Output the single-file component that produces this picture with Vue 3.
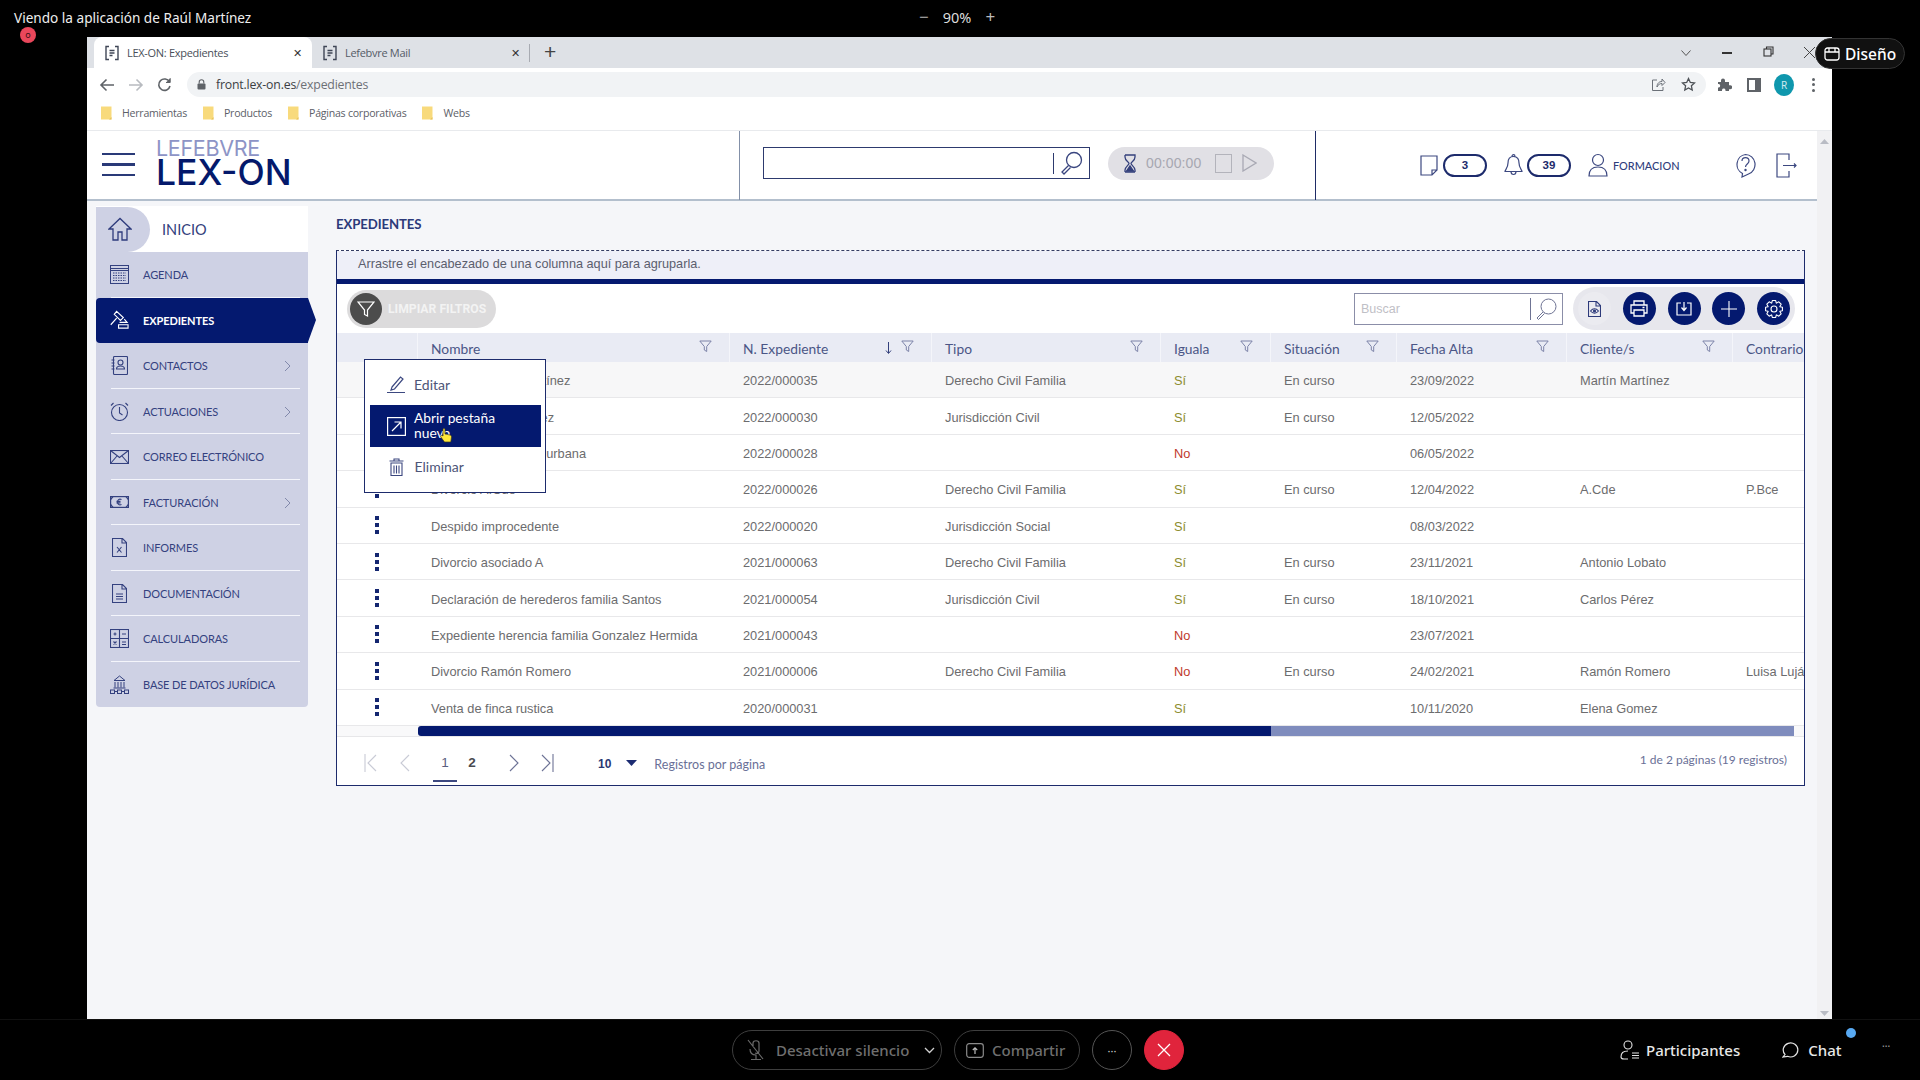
<script setup>
const nav = [
  { t: 'AGENDA', i: 'cal' },
  { t: 'EXPEDIENTES', i: 'gavel', active: true },
  { t: 'CONTACTOS', i: 'book', more: true },
  { t: 'ACTUACIONES', i: 'clock', more: true },
  { t: 'CORREO ELECTRÓNICO', i: 'mail' },
  { t: 'FACTURACIÓN', i: 'money', more: true },
  { t: 'INFORMES', i: 'xdoc' },
  { t: 'DOCUMENTACIÓN', i: 'doc' },
  { t: 'CALCULADORAS', i: 'calc' },
  { t: 'BASE DE DATOS JURÍDICA', i: 'bank' }
]
const cols = ['Nombre', 'N. Expediente', 'Tipo', 'Iguala', 'Situación', 'Fecha Alta', 'Cliente/s']
const rows = [
  ['Divorcio Martín Martínez', '2022/000035', 'Derecho Civil Familia', 'Sí', 'En curso', '23/09/2022', 'Martín Martínez', ''],
  ['Divorcio Laura Núñez', '2022/000030', 'Jurisdicción Civil', 'Sí', 'En curso', '12/05/2022', '', ''],
  ['Compra-venta finca urbana', '2022/000028', '', 'No', '', '06/05/2022', '', ''],
  ['Divorcio A.Cde', '2022/000026', 'Derecho Civil Familia', 'Sí', 'En curso', '12/04/2022', 'A.Cde', 'P.Bce'],
  ['Despido improcedente', '2022/000020', 'Jurisdicción Social', 'Sí', '', '08/03/2022', '', ''],
  ['Divorcio asociado A', '2021/000063', 'Derecho Civil Familia', 'Sí', 'En curso', '23/11/2021', 'Antonio Lobato', ''],
  ['Declaración de herederos familia Santos', '2021/000054', 'Jurisdicción Civil', 'Sí', 'En curso', '18/10/2021', 'Carlos Pérez', ''],
  ['Expediente herencia familia Gonzalez Hermida', '2021/000043', '', 'No', '', '23/07/2021', '', ''],
  ['Divorcio Ramón Romero', '2021/000006', 'Derecho Civil Familia', 'No', 'En curso', '24/02/2021', 'Ramón Romero', 'Luisa Luján'],
  ['Venta de finca rustica', '2020/000031', '', 'Sí', '', '10/11/2020', 'Elena Gomez', '']
]
const bookmarks = ['Herramientas', 'Productos', 'Páginas corporativas', 'Webs']

const gear = (() => {
  const pts = []
  const teeth = 8
  for (let k = 0; k < teeth; k++) {
    const a = (k / teeth) * Math.PI * 2
    const s = Math.PI / teeth
    const p = [[a - s * 0.95, 6.4], [a - s * 0.5, 8.6], [a + s * 0.5, 8.6], [a + s * 0.95, 6.4]]
    for (const [t, r] of p) pts.push((9 + r * Math.cos(t)).toFixed(2) + ',' + (9 + r * Math.sin(t)).toFixed(2))
  }
  return pts.join(' ')
})()
</script>

<template>
  <div class="screen">
    <div class="topbar">
      <span class="viewing">Viendo la aplicación de Raúl Martínez</span>
      <div class="zoomctl"><span class="pm">−</span><span>90%</span><span class="pm">+</span></div>
    </div>
    <span class="recdot">o</span>
    <div class="design">
      <svg width="16" height="14" viewBox="0 0 16 14" fill="none" stroke="#fff" stroke-width="1.3"><rect x="1" y="1" width="14" height="12" rx="2.5"/><path d="M1 5h14M5 1v4M11 1v4"/></svg>
      <span>Diseño</span>
    </div>

    <div class="middle">
      <div class="window">
        <div class="tabstrip">
          <div class="tab active">
            <svg class="tabicon" width="16" height="16" viewBox="0 0 16 16" fill="none" stroke="#3f4656" stroke-width="1.4"><path d="M5 1.500H2v13h3M11 1.500h3v13h-3M5.500 5.500h5M5.500 8h5M5.500 10.500h3"/></svg>
            <span class="tabtext">LEX-ON: Expedientes</span><span class="tabx">✕</span>
          </div>
          <div class="tab">
            <svg class="tabicon" width="16" height="16" viewBox="0 0 16 16" fill="none" stroke="#3f4656" stroke-width="1.4"><path d="M5 1.500H2v13h3M11 1.500h3v13h-3M5.500 5.500h5M5.500 8h5M5.500 10.500h3"/></svg>
            <span class="tabtext">Lefebvre Mail</span><span class="tabx">✕</span>
          </div>
          <span class="tabsep"></span>
          <span class="tabplus">+</span>
          <div class="winctl">
            <svg width="12" height="8" viewBox="0 0 12 8" fill="none" stroke="#555" stroke-width="1"><path d="M1.500 1.500 6 6.500l4.500-5"/></svg>
            <span class="wmin"></span>
            <svg width="11" height="11" viewBox="0 0 11 11" fill="none" stroke="#333" stroke-width="1.100"><rect x="1" y="3" width="7" height="7"/><path d="M3.500 3V1H10v7H8"/></svg>
            <svg width="13" height="13" viewBox="0 0 13 13" fill="none" stroke="#444" stroke-width="1"><path d="M1 1l11 11M12 1 1 12"/></svg>
          </div>
        </div>

        <div class="toolbar">
          <svg class="tb" width="16" height="14" viewBox="0 0 16 14" fill="none" stroke="#5f6368" stroke-width="1.600"><path d="M15 7H2M7.500 1.500 2 7l5.500 5.500"/></svg>
          <svg class="tb" width="16" height="14" viewBox="0 0 16 14" fill="none" stroke="#b8bbc0" stroke-width="1.600"><path d="M1 7h13M8.500 1.500 14 7l-5.500 5.500"/></svg>
          <svg class="tb" width="15" height="15" viewBox="0 0 15 15" fill="none" stroke="#5f6368" stroke-width="1.600"><path d="M12.500 5A5.700 5.700 0 1 0 13 9"/><path d="M13.200 1.200v4.300H9" fill="#5f6368" stroke-width="1"/></svg>
          <div class="omni">
            <svg width="9" height="11" viewBox="0 0 9 11" fill="#5f6368"><rect x="0.500" y="4.500" width="8" height="6" rx="1"/><path d="M2.200 4.500V3a2.300 2.300 0 0 1 4.600 0v1.500" fill="none" stroke="#5f6368" stroke-width="1.100"/></svg>
            <span class="url">front.lex-on.es<em>/expedientes</em></span>
            <svg class="share" width="15" height="15" viewBox="0 0 15 15" fill="none" stroke="#6b7078" stroke-width="1"><path d="M6 3H1.500v10.500H12V10M6 10c0-4 2.500-5.500 5-5.500V2l3 3.500-3 3V6.500c-2 0-4 1-5 3.500z"/></svg>
            <svg width="15" height="15" viewBox="0 0 15 15" fill="none" stroke="#4d5156" stroke-width="1.300"><path d="M7.500 1.500l1.800 3.900 4.200.5-3.100 2.900.8 4.200-3.700-2.100-3.700 2.100.8-4.200L1.500 5.900l4.200-.5z"/></svg>
          </div>
          <svg class="tbr first" width="15" height="15" viewBox="0 0 15 15" fill="#5f6368"><path d="M1 5h3V3.500a2 2 0 0 1 4 0V5h4v3.200h1.200a2 2 0 0 1 0 4H12V14H8.500v-1a1.800 1.800 0 0 0-3.500 0v1H1v-3.500h.8a1.800 1.800 0 0 0 0-3.500H1z"/></svg>
          <svg class="tbr" width="14" height="14" viewBox="0 0 14 14" fill="#5f6368"><path d="M0 0h14v14H0zM2 2v10h6V2z" fill-rule="evenodd"/></svg>
          <span class="avatar">R</span>
          <span class="kebabchrome"><i></i><i></i><i></i></span>
        </div>

        <div class="bookmarks">
          <div v-for="b in bookmarks" :key="b" class="bm">
            <svg width="11" height="15" viewBox="0 0 11 15"><path d="M0 1.500h10.500v13H0z" fill="#f8da7c"/><path d="M8 14.500 10.500 12v2.500z" fill="#e6c25c"/></svg>
            <span>{{ b }}</span>
          </div>
        </div>

        <div class="app">
          <div class="appmain">
            <header class="apphead">
              <div class="brand">
                <div class="burger"><i></i><i></i><i></i></div>
                <div class="logo"><span class="l1">LEFEBVRE</span><span class="l2">LEX-ON</span></div>
              </div>
              <div class="headmid">
                <div class="gsearch">
                  <span class="vbar"></span>
                  <svg width="23" height="24" viewBox="0 0 23 24" fill="none" stroke="#39457f" stroke-width="1.300"><circle cx="14" cy="9" r="7.500"/><path d="M8.500 14.500 2 21l2 2 6.500-6.500"/></svg>
                </div>
                <div class="timer">
                  <svg width="12" height="19" viewBox="0 0 12 19" fill="none" stroke="#34407c" stroke-width="1.300"><path d="M1 1h10v2M1 3V1M1 18h10M1 3c0 4 4 5 4 6.500S1 13 1 16v2M11 3c0 4-4 5-4 6.500s4 3.500 4 6.500v2"/><path d="M2.500 17 6 12l3.500 5z" fill="#34407c"/></svg>
                  <span class="ttime">00:00:00</span>
                  <span class="tstop"></span>
                  <svg width="15" height="18" viewBox="0 0 15 18" fill="none" stroke="#a9a9b4" stroke-width="1.300"><path d="M1 1l13 8-13 8z"/></svg>
                </div>
              </div>
              <div class="headright">
                <svg class="note" width="18" height="21" viewBox="0 0 18 21" fill="none" stroke="#3c4880" stroke-width="1.200"><path d="M1 1h16v14l-5 5H1zM17 15h-5v5"/></svg>
                <span class="countpill">3</span>
                <svg class="bell" width="19" height="24" viewBox="0 0 19 24" fill="none" stroke="#3c4880" stroke-width="1.200"><path d="M9.500 3.500c-4 0-5.500 3-5.500 6.500 0 5-3 7-3 8.500h17c0-1.500-3-3.500-3-8.500 0-3.500-1.500-6.500-5.500-6.500zM8 3.500c0-2.500 3-2.500 3 0M7 18.500c0 4 5 4 5 0"/></svg>
                <span class="countpill">39</span>
                <svg class="user" width="20" height="24" viewBox="0 0 20 24" fill="none" stroke="#3c4880" stroke-width="1.200"><circle cx="10" cy="7" r="5.500"/><path d="M1 23c0-7 4-9 9-9s9 2 9 9z"/></svg>
                <span class="formacion">FORMACION</span>
                <svg class="help" width="21" height="25" viewBox="0 0 21 25" fill="none" stroke="#3c4880" stroke-width="1.200"><path d="M10.500 1.500a9.500 10 0 0 1 3 19.500L7 24l.5-3.500a9.500 10 0 0 1 3-19z"/><path d="M7 8c0-4.500 7-4.500 7 0 0 3-3.500 3-3.500 6"/><circle cx="10.500" cy="17" r=".6"/></svg>
                <svg class="logout" width="21" height="25" viewBox="0 0 21 25" fill="none" stroke="#3c4880" stroke-width="1.200"><path d="M13 7V1H1v23h12v-6M7 12.500h13M18 10.500l2 2-2 2"/></svg>
              </div>
            </header>

            <div class="appbody">
              <aside class="sidebar">
                <div class="home">
                  <span class="homeicon">
                    <svg width="24" height="24" viewBox="0 0 24 24" fill="none" stroke="#2e3b7c" stroke-width="1.300"><path d="M1 12 12 1.500 23 12h-4v11h-5v-8h-4v8H5V12z"/></svg>
                  </span>
                  <span class="hometext">INICIO</span>
                </div>
                <div class="navlist">
                  <div v-for="n in nav" :key="n.t" class="navitem" :class="{ on: n.active }">
                    <span class="navicon">
                      <svg v-if="n.i === 'cal'" width="19" height="19" viewBox="0 0 19 19" fill="none" stroke="currentColor" stroke-width="1"><rect x=".5" y=".5" width="18" height="18"/><path d="M.5 3.500h18M.5 5.500h18" /><path d="M3 8h13M3 10.500h13M3 13h13M3 15.500h13" stroke-dasharray="1.500 1"/></svg>
                      <svg v-else-if="n.i === 'gavel'" width="20" height="20" viewBox="0 0 20 20" fill="none" stroke="currentColor" stroke-width="1.200"><path d="M7 1l7 6.500-3 3L4.500 4zM7 8 .8 15M9 15h10v3.500H9z"/><path d="M15 9l3 3.500h-8"/></svg>
                      <svg v-else-if="n.i === 'book'" width="17" height="19" viewBox="0 0 17 19" fill="none" stroke="currentColor" stroke-width="1.100"><rect x="2.500" y=".5" width="14" height="18" rx="1"/><path d="M.5 4h3M.5 7h3M.5 10h3M.5 13h3"/><circle cx="9.500" cy="6.500" r="2.500"/><path d="M5.500 13c0-4 8-4 8 0z"/></svg>
                      <svg v-else-if="n.i === 'clock'" width="19" height="19" viewBox="0 0 19 19" fill="none" stroke="currentColor" stroke-width="1.100"><circle cx="9.500" cy="10.500" r="8"/><path d="M9.500 5v6l3 2M1 3.500 3.500 1M18 3.500 15.500 1"/></svg>
                      <svg v-else-if="n.i === 'mail'" width="19" height="14" viewBox="0 0 19 14" fill="none" stroke="currentColor" stroke-width="1.100"><rect x=".5" y=".5" width="18" height="13"/><path d="M.5.500l9 7 9-7M.5 13.500l6.500-7.500M18.500 13.500 12 6"/></svg>
                      <svg v-else-if="n.i === 'money'" width="19" height="12" viewBox="0 0 19 12" fill="none" stroke="currentColor" stroke-width="1.200"><rect x=".6" y=".6" width="17.800" height="10.800"/><path d="M.6 3.500 3 .6M16 .6l2.400 3M.6 8.500 3 11.400M16 11.400l2.400-3" /><path d="M11.500 3.500C9 2.500 7.500 4 7.500 6s1.500 3.500 4 2.500M6.500 5.300h4M6.500 6.800h4"/></svg>
                      <svg v-else-if="n.i === 'xdoc'" width="15" height="19" viewBox="0 0 15 19" fill="none" stroke="currentColor" stroke-width="1.100"><path d="M.5.500h10l4 4v14H.5zM10 .5v4.500h4.500M5 9l4.500 5.500M9.500 9 5 14.500"/></svg>
                      <svg v-else-if="n.i === 'doc'" width="15" height="19" viewBox="0 0 15 19" fill="none" stroke="currentColor" stroke-width="1.100"><path d="M.5.500h10l4 4v14H.5zM10 .5v4.500h4.500M4 10h7M4 12.500h7M4 15h7"/></svg>
                      <svg v-else-if="n.i === 'calc'" width="19" height="19" viewBox="0 0 19 19" fill="none" stroke="currentColor" stroke-width="1.100"><rect x=".5" y=".5" width="18" height="18"/><path d="M.5 9.500h18M9.500.5v18M3.500 5h3M5 3.500v3M12 5h4M3.500 12.500l3 3M6.500 12.500l-3 3M12 13h4M12 15.500h4"/></svg>
                      <svg v-else width="19" height="19" viewBox="0 0 19 19" fill="none" stroke="currentColor" stroke-width="1"><path d="M4 5.500 9.500 1 15 5.500zM4 5.500h11M5 7v5.500M8 7v5.500M11 7v5.500M14 7v5.500M3.500 13h12"/><rect x=".5" y="15" width="4" height="3.500"/><rect x="7.500" y="15" width="4" height="3.500"/><rect x="14.500" y="15" width="4" height="3.500"/><path d="M4.500 16.500h3M11.500 16.500h3"/></svg>
                    </span>
                    <span class="navtext">{{ n.t }}</span>
                    <svg v-if="n.more" class="chev" width="7" height="12" viewBox="0 0 7 12" fill="none" stroke="#8289ab" stroke-width="1"><path d="M1 1l5 5-5 5"/></svg>
                  </div>
                </div>
              </aside>

              <main class="content">
                <h1 class="title">EXPEDIENTES</h1>
                <section class="panel">
                  <div class="groupbar">Arrastre el encabezado de una columna aquí para agruparla.</div>
                  <div class="gridtools">
                    <div class="clearbtn">
                      <span class="clearcirc">
                        <svg width="18" height="18" viewBox="0 0 18 18" fill="none" stroke="#fff" stroke-width="1.200"><path d="M1 2h16l-6.500 8v6l-3-1.500V10z"/></svg>
                      </span>
                      <span class="cleartext">LIMPIAR FILTROS</span>
                    </div>
                    <div class="gsearch2">
                      <span class="ph">Buscar</span>
                      <span class="vbar2"></span>
                      <svg width="22" height="22" viewBox="0 0 22 22" fill="none" stroke="#6f7494" stroke-width="1"><circle cx="13.500" cy="8.500" r="7.500"/><path d="M8 14 2 20l1.500 1.500 6-6"/></svg>
                    </div>
                    <div class="actions">
                      <span class="act plain">
                        <svg width="13" height="16" viewBox="0 0 13 16" fill="none" stroke="#2d3a7a" stroke-width="1.100"><path d="M.5.500h8l4 4v11H.5zM8 .5V5h4.500"/><path d="M2.500 10c2.500-3 5.500-3 8 0-2.500 3-5.500 3-8 0z"/><circle cx="6.500" cy="10" r="1" fill="#2d3a7a"/></svg>
                      </span>
                      <span class="act">
                        <svg width="18" height="17" viewBox="0 0 18 17" fill="none" stroke="#fff" stroke-width="1.300"><path d="M4 5V1h10v4M4 13H1V5h16v8h-3M4 10h10v6H4zM12.500 7.500h2"/></svg>
                      </span>
                      <span class="act">
                        <svg width="16" height="15" viewBox="0 0 16 15" fill="none" stroke="#fff" stroke-width="1.200"><path d="M5 2H1v12h14V2h-4M8 1v8M5.500 6.500 8 9.500l2.500-3"/></svg>
                      </span>
                      <span class="act">
                        <svg width="18" height="18" viewBox="0 0 18 18" fill="none" stroke="#fff" stroke-width="1.100"><path d="M9 1v16M1 9h16"/></svg>
                      </span>
                      <span class="act">
                        <svg width="18" height="18" viewBox="0 0 18 18" fill="none" stroke="#fff" stroke-width="1.100" stroke-linejoin="round"><polygon :points="gear"/><circle cx="9" cy="9" r="3"/></svg>
                      </span>
                    </div>
                  </div>

                  <div class="gridwrap">
                    <div class="ghead">
                      <div class="hfirst"></div>
                      <div v-for="c in cols" :key="c" class="hcell">
                        <span class="hname">{{ c }}</span>
                        <svg v-if="c === 'N. Expediente'" class="sort" width="7" height="12" viewBox="0 0 7 12" fill="none" stroke="#34407c" stroke-width="1"><path d="M3.500 0v11M1 8.500l2.500 3 2.500-3"/></svg>
                        <svg class="hfilter" width="13" height="13" viewBox="0 0 13 13" fill="none" stroke="#7c83a8" stroke-width="1"><path d="M.8 1h11.400L7.700 6.500v5l-2.400-1.500V6.500z"/></svg>
                      </div>
                      <div class="hcell last"><span class="hname">Contrario</span></div>
                    </div>
                    <div v-for="(r, i) in rows" :key="i" class="grow" :class="{ hov: i === 0 }">
                      <div class="kebab"><i></i><i></i><i></i></div>
                      <div v-for="(v, j) in r" :key="j" class="cell" :class="{ si: j === 3 && v === 'Sí', no: j === 3 && v === 'No' }">{{ v }}</div>
                    </div>
                  </div>

                  <div class="hscroll"><div class="hthumb"></div></div>

                  <div class="pager">
                    <svg width="14" height="18" viewBox="0 0 14 18" fill="none" stroke="#c9cbd6" stroke-width="1.100"><path d="M1 0v18M12 1 4 9l8 8"/></svg>
                    <svg class="p2" width="10" height="18" viewBox="0 0 10 18" fill="none" stroke="#c9cbd6" stroke-width="1.100"><path d="M9 1 1 9l8 8"/></svg>
                    <span class="pnum cur">1</span>
                    <span class="pnum bold">2</span>
                    <svg class="p3" width="10" height="18" viewBox="0 0 10 18" fill="none" stroke="#6d7396" stroke-width="1.100"><path d="M1 1l8 8-8 8"/></svg>
                    <svg class="p4" width="14" height="18" viewBox="0 0 14 18" fill="none" stroke="#6d7396" stroke-width="1.100"><path d="M13 0v18M2 1l8 8-8 8"/></svg>
                    <span class="psize">10</span>
                    <svg class="pcar" width="11" height="6" viewBox="0 0 11 6" fill="#1c2c72"><path d="M0 0h11L5.500 6z"/></svg>
                    <span class="plabel">Registros por página</span>
                    <span class="pinfo">1 de 2 páginas (19 registros)</span>
                  </div>

                  <div class="popup">
                    <div class="pitem">
                      <svg width="19" height="18" viewBox="0 0 19 18" fill="none" stroke="#3c4880" stroke-width="1.200"><path d="M5 12 13.500 2l2.500 2-8.500 10-3.500 1zM0 17.500h18"/></svg>
                      <span>Editar</span>
                    </div>
                    <div class="pitem sel">
                      <svg width="19" height="19" viewBox="0 0 19 19" fill="none" stroke="#fff" stroke-width="1.200"><rect x=".6" y=".6" width="17.800" height="17.800"/><path d="M5 14 14 5M7.500 5H14v6.500"/></svg>
                      <span>Abrir pestaña nueva</span>
                      <svg class="hand" width="12" height="15" viewBox="0 0 12 15"><path d="M3 1.500c0-1.300 2-1.300 2 0V6l5 1c1 .3 1.500 1 1.500 2l-.7 5H4.500L.8 9c-.8-1.300.8-2.200 2.200-1z" fill="#ffe83a" stroke="#3a3a20" stroke-width=".7"/></svg>
                    </div>
                    <div class="pitem">
                      <svg width="15" height="18" viewBox="0 0 15 18" fill="none" stroke="#3c4880" stroke-width="1.100"><path d="M.5 3h14M5 3V1h5v2M2 5h11v12.500H2zM5 7.500v8M7.500 7.500v8M10 7.500v8"/></svg>
                      <span>Eliminar</span>
                    </div>
                  </div>
                </section>
              </main>
            </div>
          </div>
          <div class="vscroll">
            <svg width="9" height="5" viewBox="0 0 9 5" fill="#b9bcc4"><path d="M4.500 0 9 5H0z"/></svg>
            <svg width="9" height="5" viewBox="0 0 9 5" fill="#b9bcc4"><path d="M0 0h9L4.500 5z"/></svg>
          </div>
        </div>
      </div>
    </div>

    <div class="callbar">
      <div class="cpill mute">
        <svg width="18" height="22" viewBox="0 0 18 22" fill="none" stroke="#6b6b6b" stroke-width="1.200"><path d="M1 1l15 19M6 8V4c0-3 6-3 6 0v8c0 2-2 3-4 2M3 10c0 5 3 6 6 6v4M4 20.500h10"/></svg>
        <span>Desactivar silencio</span>
        <svg class="cchev" width="11" height="7" viewBox="0 0 11 7" fill="none" stroke="#d0d0d0" stroke-width="1.300"><path d="M1 1l4.500 4.500L10 1"/></svg>
      </div>
      <div class="cpill share2">
        <svg width="18" height="15" viewBox="0 0 18 15" fill="none" stroke="#8a8a8a" stroke-width="1.200"><rect x=".7" y=".7" width="16.600" height="13.600" rx="2.500"/><path d="M9 11V5M6.800 7 9 4.800 11.200 7" stroke="#bbb"/></svg>
        <span>Compartir</span>
      </div>
      <div class="cround">···</div>
      <div class="cround red">
        <svg width="14" height="14" viewBox="0 0 14 14" fill="none" stroke="#fff" stroke-width="1.300"><path d="M1 1l12 12M13 1 1 13"/></svg>
      </div>
      <div class="cright">
        <svg width="20" height="20" viewBox="0 0 20 20" fill="none" stroke="#e4e4e4" stroke-width="1.100"><circle cx="8" cy="5" r="4"/><path d="M8 11c-5 0-7 2-7 6 0 1.500 1 2 3 2h4M12 13h7M12 15.500h7M12 18h7"/></svg>
        <span class="ptext">Participantes</span>
        <svg class="chatic" width="17" height="16" viewBox="0 0 17 16" fill="none" stroke="#e4e4e4" stroke-width="1.200"><path d="M3 12.500a7.300 7 0 1 1 2.500 1.800L1 15z"/></svg>
        <span class="chattext">Chat</span>
        <span class="bluedot"></span>
        <span class="morer">···</span>
      </div>
    </div>
  </div>
</template>

<style scoped>
.screen { position: relative; width: 1920px; height: 1080px; background: #000; display: flex; flex-direction: column; overflow: hidden; font-family: "Liberation Sans", Arial, sans-serif; }
.topbar { height: 37px; display: flex; align-items: center; position: relative; color: #eee; font-family: "Noto Sans", sans-serif; }
.viewing { margin-left: 14px; font-size: 13.600px; margin-top: -2px; }
.zoomctl { position: absolute; left: 919px; top: 5px; display: flex; gap: 14px; align-items: center; font-size: 14.500px; color: #ddd; }
.pm { font-size: 17px; color: #bbb; }
.recdot { position: absolute; left: 20px; top: 27px; width: 16px; height: 16px; border-radius: 50%; background: #e9475b; color: #3a0f14; font: 9px/15px "Noto Sans", sans-serif; text-align: center; z-index: 5; }
.design { position: absolute; left: 1815px; top: 38px; width: 90px; height: 31px; border-radius: 16px; background: #111; border: 1px solid #333; box-sizing: border-box; display: flex; align-items: center; gap: 5px; padding-left: 8px; color: #fff; font: 500 15.500px "Noto Sans", sans-serif; z-index: 5; }
.middle { height: 982px; padding-left: 87px; }
.window { width: 1745px; height: 982px; background: #fff; display: flex; flex-direction: column; }

.tabstrip { height: 31px; background: #dee1e6; display: flex; align-items: stretch; padding-left: 7px; position: relative; }
.tab { width: 218px; display: flex; align-items: center; padding: 0 10px 0 10px; box-sizing: border-box; color: #555b66; font: 11px "Open Sans", sans-serif; }
.tab.active { background: #fff; border-radius: 8px 8px 0 0; color: #4a4f59; }
.tabicon { margin-right: 7px; }
.tabtext { flex: 1; letter-spacing: -.3px; }
.tabx { font-size: 11px; color: #333; }
.tabsep { width: 1px; height: 18px; background: #a8abb2; margin: 7px 0 0 -1px; }
.tabplus { font: 300 21px/29px "Liberation Sans", sans-serif; color: #444; margin-left: 14px; }
.winctl { position: absolute; left: 1591px; right: 0; top: 0; height: 31px; display: flex; align-items: center; }
.winctl svg:nth-child(1) { position: absolute; left: 2px; top: 12px; }
.wmin { position: absolute; left: 44px; top: 15px; width: 10px; height: 1.500px; background: #333; }
.winctl svg:nth-child(3) { position: absolute; left: 85px; top: 9px; }
.winctl svg:nth-child(4) { position: absolute; left: 125px; top: 9px; }

.toolbar { height: 30px; display: flex; align-items: center; padding: 2px 0 0 12px; border-top: 1px solid #fff; box-sizing: border-box; }
.tb { margin-right: 13px; flex: none; }
.omni { width: 1519px; height: 25px; margin-left: 2px; border-radius: 13px; background: #f1f3f5; display: flex; align-items: center; padding: 0 10px 0 10px; box-sizing: border-box; }
.url { margin-left: 10px; flex: 1; font: 12.300px "Open Sans", sans-serif; color: #3c4043; letter-spacing: -.2px; }
.url em { font-style: normal; color: #6d7075; }
.share { margin-right: 15px; }
.tbr { margin-left: 15px; flex: none; }
.tbr.first { margin-left: 11px; }
.avatar { margin-left: 13px; width: 20px; height: 22px; border-radius: 50%; background: #0f97ad; color: #cfeaf0; font: 10px/22px "Noto Sans", sans-serif; text-align: center; }
.kebabchrome { margin-left: 18px; display: flex; flex-direction: column; gap: 2.500px; }
.kebabchrome i { width: 3px; height: 3px; border-radius: 50%; background: #5f6368; }

.bookmarks { height: 33px; display: flex; align-items: center; padding: 0 0 3px 14px; border-bottom: 1px solid #e8eaed; box-sizing: border-box; gap: 16px; }
.bm { display: flex; align-items: center; gap: 10px; font: 10.600px "Open Sans", sans-serif; color: #5c6068; letter-spacing: -.25px; }

.app { flex: 1; display: flex; min-height: 0; }
.appmain { flex: 1; min-width: 0; background: #f5f6f9; display: flex; flex-direction: column; }
.vscroll { width: 15px; background: #f1f1f3; display: flex; flex-direction: column; justify-content: space-between; align-items: center; padding: 8px 0 3px; box-sizing: border-box; }

.apphead { height: 70px; background: #fff; border-bottom: 2px solid #b3bfcd; box-sizing: border-box; display: flex; flex: none; }
.brand { width: 653px; display: flex; align-items: center; border-right: 1.500px solid #8390a8; box-sizing: border-box; padding-left: 15px; margin-bottom: -1px; }
.burger { width: 33px; display: flex; flex-direction: column; gap: 8px; margin-right: 21px; margin-top: -2px; }
.burger i { height: 2.500px; background: #2a3a78; }
.logo { display: flex; flex-direction: column; font-family: Inter, sans-serif; margin-top: -7px; }
.l1 { font-size: 21.500px; line-height: 21px; color: #8d94c6; letter-spacing: -.3px; }
.l2 { font-size: 35.500px; line-height: 28px; color: #04196b; font-weight: 500; letter-spacing: 0; }
.headmid { width: 576px; display: flex; align-items: center; gap: 18px; padding-left: 23px; border-right: 1.500px solid #1f2c66; box-sizing: border-box; margin-bottom: -1px; padding-bottom: 5px; }
.gsearch { width: 327px; height: 32px; border: 1.500px solid #2d3a6e; box-sizing: border-box; display: flex; align-items: center; justify-content: flex-end; padding-right: 6px; gap: 6px; background: #fff; }
.vbar { width: 1px; height: 21px; background: #2d3a6e; }
.timer { width: 166px; height: 33px; border-radius: 17px; background: #e1e0e5; display: flex; align-items: center; padding-left: 16px; box-sizing: border-box; }
.ttime { margin-left: 10px; font: 14px "Liberation Sans", sans-serif; color: #a7a7b1; letter-spacing: .1px; }
.tstop { width: 15px; height: 17px; border: 1.500px solid #b3b3bb; margin: 0 10px 0 14px; }
.headright { flex: 1; position: relative; display: flex; align-items: center; padding-left: 104px; }
.note { margin-right: 5px; }
.countpill { width: 44px; height: 23px; border-radius: 12px; border: 2px solid #1d2b6c; box-sizing: border-box; display: flex; align-items: center; justify-content: center; font: 700 11.500px "Liberation Sans", sans-serif; color: #1d2b6c; }
.bell { margin: 0 4px 0 17px; }
.user { margin-left: 17px; }
.formacion { margin-left: 5px; font: 500 10.900px Lato, sans-serif; color: #2f3d7c; }
.help { margin-left: 55px; }
.logout { margin-left: 20px; }

.appbody { flex: 1; display: flex; min-height: 0; }
.sidebar { width: 212px; margin: 5px 0 0 9px; flex: none; }
.home { height: 46px; background: #fff; display: flex; align-items: center; }
.homeicon { width: 54px; height: 45px; background: #ced1e4; border-radius: 0 24px 24px 0; display: flex; align-items: center; justify-content: center; padding-right: 6px; box-sizing: border-box; }
.hometext { margin-left: 12px; font: 14.500px Lato, sans-serif; color: #33407c; }
.navlist { background: #ced1e4; border-radius: 0 0 4px 4px; display: flex; flex-direction: column; }
.navitem { height: 45.500px; display: flex; align-items: center; position: relative; padding-left: 14px; color: #34417f; box-sizing: border-box; }
.navitem::after { content: ""; position: absolute; left: 15px; right: 8px; bottom: 0; height: 1px; background: #f4f5fb; }
.navitem:last-child::after, .navitem.on::after { display: none; }
.navitem.on { background: #04196f; color: #fff; border-radius: 4px 0 0 4px; font-weight: 700; }
.navitem.on::before { content: ""; position: absolute; left: 100%; top: 0; border-left: 8px solid #04196f; border-top: 22.750px solid transparent; border-bottom: 22.750px solid transparent; }
.navicon { width: 19px; height: 20px; display: flex; align-items: center; justify-content: center; flex: none; }
.navtext { margin-left: 14px; font: 11px Lato, sans-serif; letter-spacing: -.1px; }
.navitem.on .navtext { font-weight: 700; }
.chev { position: absolute; right: 17px; top: 17px; }

.content { width: 1469px; margin-left: 28px; flex: none; }
.title { margin: 14px 0 0; font: 700 13.200px/18px Lato, sans-serif; color: #2c3a7a; height: 35px; letter-spacing: -.1px; }
.panel { position: relative; height: 536px; box-sizing: border-box; background: #fff; border: 1px solid #1d2b6c; border-top: 1px dashed #333b63; overflow: hidden; display: flex; flex-direction: column; }
.groupbar { height: 28px; background: #eeeff8; font-size: 12.700px; color: #5b5e6e; padding-left: 21px; line-height: 26px; flex: none; border-bottom: 5px solid #04196f; box-sizing: content-box; }
.gridtools { height: 49px; display: flex; align-items: center; flex: none; position: relative; }
.clearbtn { margin-left: 10px; width: 149px; height: 38px; border-radius: 19px; background: #dcdbdc; display: flex; align-items: center; padding-left: 3px; box-sizing: border-box; }
.clearcirc { width: 32px; height: 32px; border-radius: 50%; background: #4c4c4c; display: flex; align-items: center; justify-content: center; }
.cleartext { margin-left: 6px; color: #f3f3f3; font: 700 12.200px Roboto, sans-serif; }
.gsearch2 { position: absolute; left: 1017px; top: 9px; width: 209px; height: 32px; border: 1px solid #8b8ea8; box-sizing: border-box; display: flex; align-items: center; padding: 0 5px 0 6px; }
.ph { flex: 1; font-size: 12.500px; color: #bfc0c6; }
.vbar2 { width: 1px; height: 22px; background: #6f7494; margin-right: 4px; }
.actions { position: absolute; left: 1236px; top: 3px; width: 222px; height: 43px; border-radius: 22px; background: #e7e7ed; display: flex; align-items: center; justify-content: space-between; padding: 0 5px; box-sizing: border-box; }
.act { width: 33px; height: 33px; border-radius: 50%; background: #04196f; display: flex; align-items: center; justify-content: center; }
.act.plain { background: #ebebf0; }

.gridwrap { flex: none; width: 1640px; }
.ghead, .grow { display: grid; grid-template-columns: 80px 312px 202px 229px 110px 126px 170px 166px 245px; }
.ghead { height: 29px; background: #e9ebf4; }
.hcell { display: flex; align-items: center; padding: 2px 17px 0 14px; position: relative; box-shadow: inset 1px 0 0 #f4f5fa; white-space: nowrap; overflow: hidden; }
.hcell.last { overflow: visible; }
.hname { flex: 1; font: 13.800px Lato, sans-serif; color: #4b5686; }
.hfilter { flex: none; margin-top: -4px; }
.sort { margin-right: 9px; margin-top: -2px; }
.grow { height: 36.400px; border-bottom: 1px solid #e8e8ea; box-sizing: border-box; background: #fff; align-items: center; }
.grow.hov { background: #f7f7f8; }
.cell { padding: 2px 0 0 14px; font-size: 12.800px; color: #6c6c6e; white-space: nowrap; overflow: hidden; }
.cell.si { color: #8c8c2e; }
.cell.no { color: #c0392b; }
.kebab { padding-left: 38px; display: flex; flex-direction: column; gap: 3px; }
.kebab i { width: 4px; height: 4px; background: #142670; }
.hscroll { height: 11px; background: #f9f9fa; padding-left: 81px; padding-right: 10px; flex: none; border-bottom: 1px solid #e7e7e9; box-sizing: border-box; }
.hthumb { height: 10px; background: linear-gradient(to right, #04196f 0 853px, #7f8cbd 853px); border-radius: 3px 0 0 3px; }

.pager { flex: 1; display: flex; align-items: center; padding: 4px 0 0 27px; position: relative; }
.p2 { margin-left: 22px; }
.pnum { width: 24px; text-align: center; font: 13.500px "Liberation Sans", sans-serif; color: #5a6080; height: 24px; line-height: 24px; position: relative; top: 2px; }
.pnum.cur { margin-left: 23px; border-bottom: 2px solid #3c4880; margin-right: 3px; padding-bottom: 5px; top: 4px; }
.pnum.bold { font-weight: 700; color: #4a4a4f; top: 0; }
.p3 { margin-left: 25px; }
.p4 { margin-left: 21px; }
.psize { margin-left: 44px; font: 700 12px "Liberation Sans", sans-serif; color: #2b3873; position: relative; top: 1px; }
.pcar { margin-left: 15px; }
.plabel { margin-left: 17px; font: 12.500px Lato, sans-serif; color: #6a7097; position: relative; top: 2px; }
.pinfo { position: absolute; right: 17px; top: 15px; font: 12px Lato, sans-serif; color: #6a7097; }

.popup { position: absolute; left: 27px; top: 108px; width: 182px; height: 134px; background: #fff; border: 1.500px solid #1d2b6c; box-sizing: border-box; padding: 0 4.500px; display: flex; flex-direction: column; z-index: 4; }
.pitem { display: flex; align-items: center; gap: 8.500px; height: 45px; padding-left: 17px; font: 14px Lato, sans-serif; color: #4d5578; position: relative; }
.pitem svg { flex: none; }
.pitem:first-child { height: 45px; padding-top: 3px; box-sizing: border-box; }
.pitem.sel { height: 42px; background: #04196f; color: #fff; padding-left: 17px; padding-right: 20px; line-height: 14.700px; font-size: 13.800px; }
.pitem:last-child { height: 39px; padding-left: 19px; }
.pitem:last-child span { margin-left: 2.500px; }
.hand { position: absolute; left: 70px; top: 23px; }

.callbar { height: 61px; background: #000; display: flex; align-items: center; padding-left: 732px; position: relative; font-family: "Noto Sans", sans-serif; border-top: 1px solid #111; box-sizing: border-box; }
.cpill { height: 40px; border-radius: 20px; border: 1px solid #3e3e3e; box-sizing: border-box; display: flex; align-items: center; color: #6f6f6f; font-size: 15px; font-weight: 500; }
.mute { width: 210px; padding-left: 14px; gap: 11px; }
.cchev { margin-left: 4px; }
.share2 { width: 126px; margin-left: 12px; padding-left: 11px; gap: 8px; }
.cround { width: 40px; height: 40px; border-radius: 50%; border: 1px solid #555; box-sizing: border-box; margin-left: 12px; display: flex; align-items: center; justify-content: center; color: #ccc; font-size: 11px; }
.red { background: #e0243c; border-color: #e0243c; }
.cright { position: absolute; left: 1620px; top: 0; right: 0; height: 100%; color: #e8e8e8; display: flex; align-items: center; font-size: 15px; font-weight: 500; }
.ptext { margin-left: 6px; }
.chatic { margin-left: 42px; }
.chattext { margin-left: 9px; }
.bluedot { position: absolute; left: 226px; top: 8px; width: 10px; height: 10px; border-radius: 50%; background: #58a9f2; }
.morer { position: absolute; left: 262px; top: 19px; font-size: 10px; color: #999; }
</style>

<style>
html, body { margin: 0; background: #000; }
</style>
